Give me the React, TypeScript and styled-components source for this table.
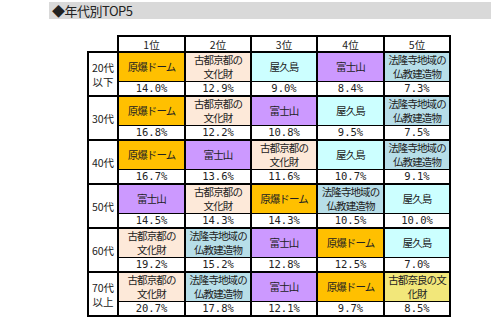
import React from 'react'
import styled, { createGlobalStyle } from 'styled-components'

type Spot = {
   lines: string[]
   color: string
}

type Row = {
   label: string[]
   items: { spot: Spot; pct: string }[]
}

const GlobalStyle = createGlobalStyle`
   body {
      margin: 0;
      background: #fff;
      font-family: "Noto Sans CJK JP", "Noto Sans", sans-serif;
      color: #000;
   }
`

const dome: Spot = { lines: ['原爆ドーム'], color: '#ffc000' }
const kyoto: Spot = { lines: ['古都京都の', '文化財'], color: '#fde9d9' }
const yaku: Spot = { lines: ['屋久島'], color: '#ccffff' }
const fuji: Spot = { lines: ['富士山'], color: '#cc99ff' }
const horyu: Spot = { lines: ['法隆寺地域の', '仏教建造物'], color: '#b7dee8' }
const nara: Spot = { lines: ['古都奈良の文', '化財'], color: '#f2e77a' }

const rows: Row[] = [
   {
      label: ['20代', '以下'],
      items: [
         { spot: dome, pct: '14.0%' },
         { spot: kyoto, pct: '12.9%' },
         { spot: yaku, pct: '9.0%' },
         { spot: fuji, pct: '8.4%' },
         { spot: horyu, pct: '7.3%' },
      ],
   },
   {
      label: ['30代'],
      items: [
         { spot: dome, pct: '16.8%' },
         { spot: kyoto, pct: '12.2%' },
         { spot: fuji, pct: '10.8%' },
         { spot: yaku, pct: '9.5%' },
         { spot: horyu, pct: '7.5%' },
      ],
   },
   {
      label: ['40代'],
      items: [
         { spot: dome, pct: '16.7%' },
         { spot: fuji, pct: '13.6%' },
         { spot: kyoto, pct: '11.6%' },
         { spot: yaku, pct: '10.7%' },
         { spot: horyu, pct: '9.1%' },
      ],
   },
   {
      label: ['50代'],
      items: [
         { spot: fuji, pct: '14.5%' },
         { spot: kyoto, pct: '14.3%' },
         { spot: dome, pct: '14.3%' },
         { spot: horyu, pct: '10.5%' },
         { spot: yaku, pct: '10.0%' },
      ],
   },
   {
      label: ['60代'],
      items: [
         { spot: kyoto, pct: '19.2%' },
         { spot: horyu, pct: '15.2%' },
         { spot: fuji, pct: '12.8%' },
         { spot: dome, pct: '12.5%' },
         { spot: yaku, pct: '7.0%' },
      ],
   },
   {
      label: ['70代', '以上'],
      items: [
         { spot: kyoto, pct: '20.7%' },
         { spot: horyu, pct: '17.8%' },
         { spot: fuji, pct: '12.1%' },
         { spot: dome, pct: '9.7%' },
         { spot: nara, pct: '8.5%' },
      ],
   },
]

const ranks = ['1位', '2位', '3位', '4位', '5位']

const Page = styled.div`
   display: flex;
   flex-direction: column;
   align-items: flex-start;
   padding-top: 2px;
   width: 491px;
`

const TitleBar = styled.div`
   display: flex;
   align-items: center;
   margin-left: 49px;
   width: 442px;
   height: 17px;
   padding-left: 3px;
   box-sizing: border-box;
   background: #d9d9d9;
   font-size: 13px;
   letter-spacing: -0.5px;
   color: #222;
`

const Table = styled.table`
   margin: 16px 0 0 87px;
   border-collapse: collapse;
   table-layout: fixed;
   font-size: 10.5px;
   letter-spacing: -0.9px;
   text-align: center;
   color: #222;
`

const Corner = styled.th`
   width: 29px;
   padding: 0;
   border: none;
`

const RankHead = styled.th<{ $w: number }>`
   width: ${(p) => p.$w}px;
   height: 14px;
   padding: 0;
   border: 2px solid #000;
   font-weight: 400;
   line-height: 13px;
   letter-spacing: 0;
`

const AgeCell = styled.td`
   padding: 0;
   border: 2px solid #000;
   line-height: 15px;
   letter-spacing: 0;
`

const SpotCell = styled.td<{ $bg: string }>`
   height: 28px;
   padding: 0;
   border: 2px solid #000;
   border-bottom: 1px solid #000;
   background: ${(p) => p.$bg};
   line-height: 14px;
   white-space: nowrap;
`

const PctCell = styled.td`
   height: 13px;
   padding: 0;
   border: 2px solid #000;
   border-top: 1px solid #000;
   font-family: "DejaVu Sans Mono", "Liberation Mono", monospace;
   font-size: 10.5px;
   letter-spacing: 0;
   line-height: 13px;
`

const Line = styled.div`
   height: 14px;
`

const widths = [65, 64, 64, 65, 64]

const App: React.FC = () => (
   <Page>
      <GlobalStyle />
      <TitleBar>◆年代別TOP5</TitleBar>
      <Table>
         <thead>
            <tr>
               <Corner />
               {ranks.map((r, i) => (
                  <RankHead key={r} $w={widths[i]}>
                     {r}
                  </RankHead>
               ))}
            </tr>
         </thead>
         <tbody>
            {rows.map((row) => (
               <React.Fragment key={row.label.join('')}>
                  <tr>
                     <AgeCell rowSpan={2}>
                        {row.label.map((l) => (
                           <Line key={l}>{l}</Line>
                        ))}
                     </AgeCell>
                     {row.items.map((it, i) => (
                        <SpotCell key={i} $bg={it.spot.color}>
                           {it.spot.lines.map((l) => (
                              <Line key={l}>{l}</Line>
                           ))}
                        </SpotCell>
                     ))}
                  </tr>
                  <tr>
                     {row.items.map((it, i) => (
                        <PctCell key={i}>{it.pct}</PctCell>
                     ))}
                  </tr>
               </React.Fragment>
            ))}
         </tbody>
      </Table>
   </Page>
)

export default App
